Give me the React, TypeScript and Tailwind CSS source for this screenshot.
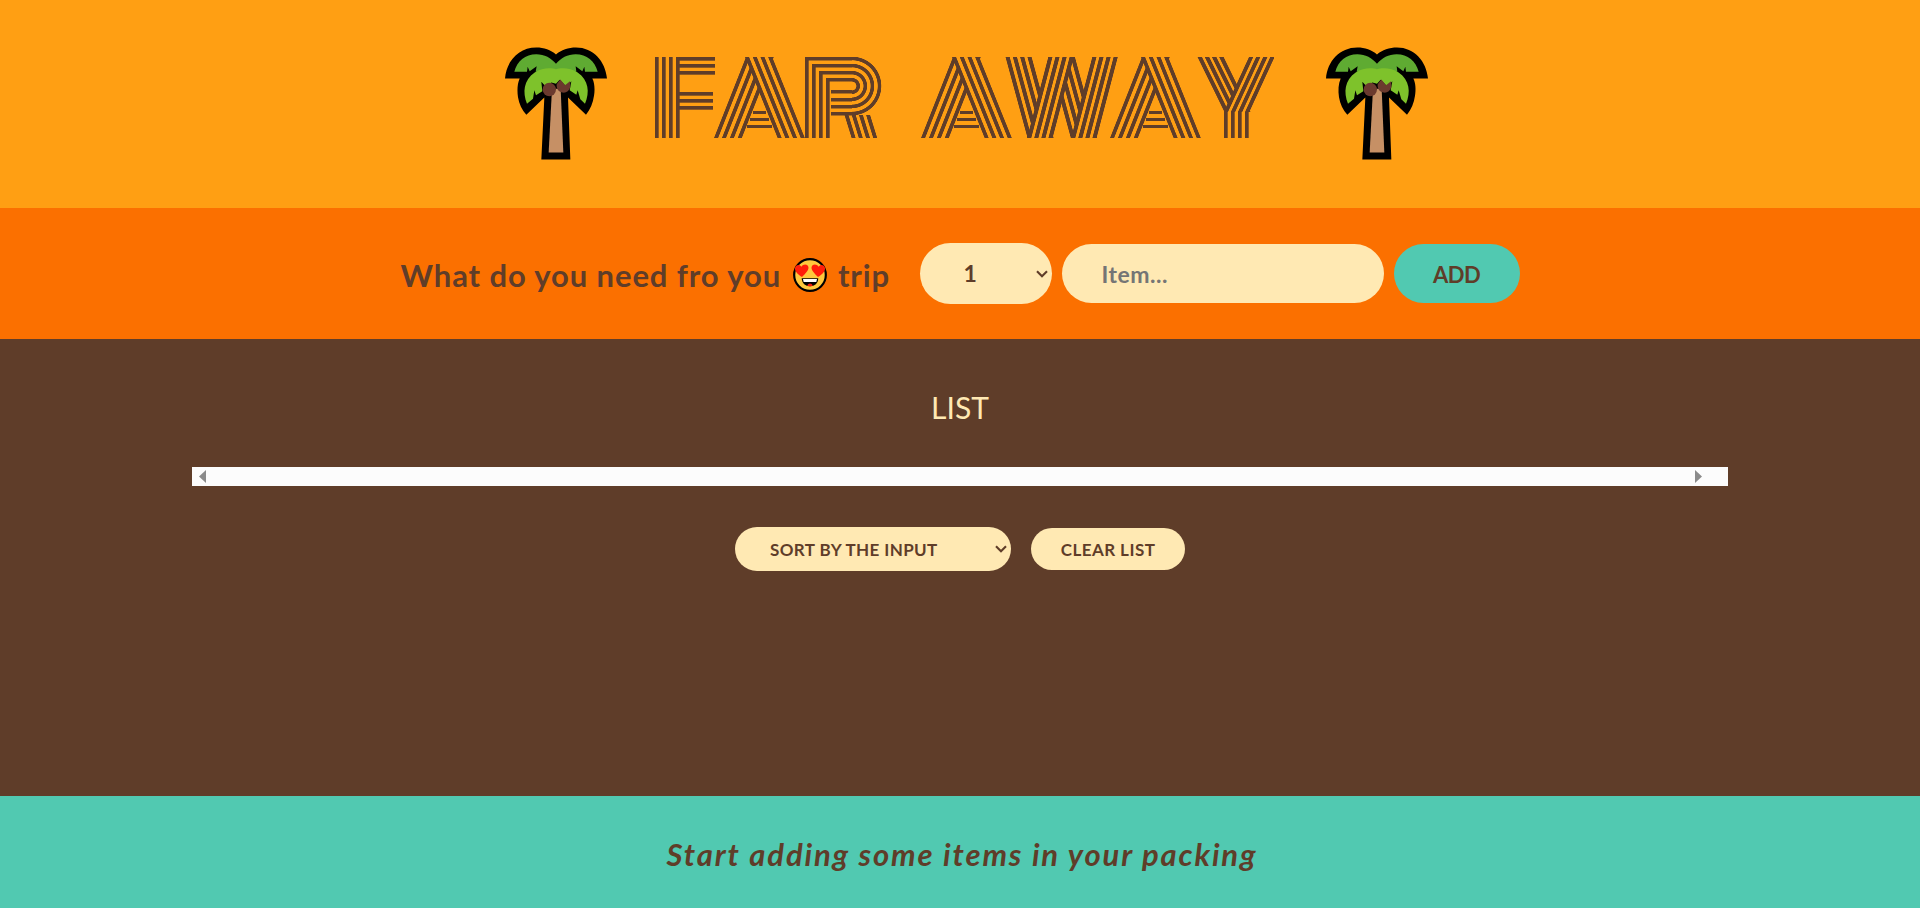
import type { CSSProperties } from "react";

const INK = "#5f3d29";
const PAPER = "#ff9f13";
const CLEAR = "rgba(95,61,41,0)";

type Tile = { image: string; x: number; y: number; w: number; h: number };

// A flat bar.
const bar = (x: number, y: number, w: number, h: number): Tile => ({
  image: `linear-gradient(${INK}, ${INK})`,
  x,
  y,
  w,
  h,
});

// Groups of four slanted stripes; `lean` is the horizontal shift per pixel of height,
// each start is the x of a group's left edge at the tile's top.
const stripes = (
  x: number,
  y: number,
  w: number,
  h: number,
  lean: number,
  starts: number[],
  pitch = 7.9,
  thick = 4.1,
  count = 4
): Tile => {
  const n = Math.hypot(1, lean);
  const angle = (Math.atan2(1, lean) * 180) / Math.PI;
  const len = w / n + (h * Math.abs(lean)) / n;
  const at = (px: number) => (px - w / 2 + (lean * h) / 2) / n + len / 2;
  const stops: string[] = [`${CLEAR} -400px`];
  const soft = 0.35;
  starts.forEach((start) => {
    for (let i = 0; i < count; i++) {
      const a = at(start + i * pitch);
      const b = at(start + i * pitch + thick);
      const before = i === 0 ? CLEAR : PAPER;
      const after = i === count - 1 ? CLEAR : PAPER;
      stops.push(`${before} ${a - soft}px`, `${INK} ${a + soft}px`, `${INK} ${b - soft}px`, `${after} ${b + soft}px`);
    }
  });
  return { image: `linear-gradient(${angle}deg, ${stops.join(", ")})`, x, y, w, h };
};

const letterA: Tile[] = [
  stripes(0, 0, 92, 81, 0.403, [31], 7.7),
  stripes(0, 0, 92, 81, -0.395, [32]),
  bar(39, 54, 13, 3.2),
  bar(36, 61, 19, 3.2),
  bar(33, 68, 25, 3.2),
];

const ring = (): Tile => {
  const s: string[] = [];
  [4.4, 11.5, 18.6, 25.7].forEach((r) => {
    s.push(`${CLEAR} ${r - 0.3}px`, `${INK} ${r + 0.3}px`, `${INK} ${r + 3.3}px`, `${CLEAR} ${r + 3.9}px`);
  });
  return { image: `radial-gradient(circle at 0px 29px, ${s.join(", ")})`, x: 47, y: 0, w: 30, h: 59 };
};

const four = [0, 1, 2, 3];

const letterR: Tile[] = [
  ring(),
  ...four.map((i) => bar(Math.round(i * 7.1), Math.round(i * 7.1), 3.7, 81 - i * 7)),
  ...four.map((i) => bar(i * 7, Math.round(i * 7.1), 47 - i * 7, 3.5)),
  ...four.map((i) => bar(26, 33.4 + i * 7.1, 21, 3.5)),
  stripes(36, 58, 41, 23, 0.31, [3.5], 7.2, 4),
];

const letterF: Tile[] = [
  ...four.map((i) => bar(Math.round(i * 7.1), 0, 3.7, 81)),
  ...[0, 7, 14].map((y) => bar(24, y, 36, 3.7)),
  ...[35, 42, 49].map((y) => bar(24, y, 34, 3.7)),
];

const letterW: Tile[] = [
  stripes(0, 0, 114, 81, -0.262, [87.3], 7.1, 4.2),
  stripes(0, 0, 114, 81, -0.262, [43.3], 7.1, 4.2),
  stripes(0, 0, 114, 81, 0.272, [0.5, 43.8], 7.3, 4.2),
];

const letterY: Tile[] = [
  stripes(0, 0, 77, 55, -0.46, [52], 7.1, 4.3),
  stripes(0, 0, 77, 55, 0.49, [0.5], 7.2, 4.5),
  ...four.map((i) => bar(26.6 + i * 7, 54.5, 3.7, 26.5)),
];

const paint = (tiles: Tile[]): CSSProperties => ({
  backgroundImage: tiles.map((t) => t.image).join(", "),
  backgroundPosition: tiles.map((t) => `${t.x}px ${t.y}px`).join(", "),
  backgroundSize: tiles.map((t) => `${t.w}px ${t.h}px`).join(", "),
});

const letters = [
  { char: "F", tiles: letterF, box: "w-[60px] indent-[-5px]" },
  { char: "A", tiles: letterA, box: "w-[92px] -ml-px indent-[-2px]" },
  { char: "R", tiles: letterR, box: "w-[77px] -ml-px indent-[3px]" },
  { char: " ", tiles: [], box: "w-[39px]" },
  { char: "A", tiles: letterA, box: "w-[92px]" },
  { char: "W", tiles: letterW, box: "w-[114px] -ml-[8px] indent-[-6px]" },
  { char: "A", tiles: letterA, box: "w-[92px] -ml-[9px]" },
  { char: "Y", tiles: letterY, box: "w-[77px] -ml-[5px] indent-[-5px]" },
];

function Title() {
  return (
    <h1 className="flex h-[81px] font-['Inter',sans-serif] text-[111px] leading-[81px] font-black tracking-[-14px] whitespace-pre text-transparent">
      {letters.map((l, i) => (
        <span
          key={i}
          style={paint(l.tiles)}
          className={`block h-[81px] shrink-0 bg-clip-text bg-no-repeat [-webkit-text-stroke:24px_transparent] ${l.box}`}
        >
          {l.char}
        </span>
      ))}
    </h1>
  );
}

function Palm() {
  return (
    <svg viewBox="14 20 306 338" className="h-[113px] w-[102px] shrink-0" aria-hidden="true">
      <path
        d="M14 114C18 62 55 21 108 21C131 21 151 28 167 42C183 28 204 21 227 21C279 21 315 62 320 114H276C283 127 284 148 281 166C278 188 270 207 257 223L203 171L210 357H123L132 171L78 223C65 208 56 190 53 170C50 150 51 130 58 114Z"
        fill="#000"
      />
      <path d="M42 94C50 61 75 41 108 41C132 41 153 52 167 70C181 52 202 41 226 41C259 41 284 61 292 94H254L252 79L246 92L226 77L228 94H106L109 77L88 92L82 79L80 94Z" fill="#5fab32" />
      <path d="M155 145H181L189 336H145Z" fill="#c69065" />
      <path
        d="M80 190C66 155 70 119 103 96C125 81 151 81 167 86C183 81 210 81 232 96C265 119 269 155 254 190L240 176L232 149L228 163L208 149L213 122L198 138L178 118L167 130L153 126L136 138L123 124L126 152L107 164L102 149L98 175Z"
        fill="#7ec22b"
      />
      <circle cx="147" cy="147" r="20" fill="#6b3a2e" />
      <path d="M169 131L180 117L194 134L209 122L210 140C206 152 197 158 186 156C174 153 168 144 169 131Z" fill="#6b3a2e" />
    </svg>
  );
}

function HeartEyes() {
  return (
    <svg viewBox="0 0 102 102" className="mr-[11px] ml-[12px] h-[34px] w-[34px] shrink-0" aria-hidden="true">
      <circle cx="51" cy="51" r="47.5" fill="#ffc83d" stroke="#000" strokeWidth="6.5" />
      <path d="M27 57C13 48 5 40 6 30C8 20 20 18 25 26C31 17 43 18 46 26C49 36 37 46 27 57Z" fill="#ff1d0a" />
      <path d="M75 57C65 46 53 36 56 26C59 18 71 17 77 26C82 18 94 20 96 30C97 40 89 48 75 57Z" fill="#ff1d0a" />
      <path d="M26 61H76C75 77 65 85 51 85S27 77 26 61Z" fill="#000" />
      <path d="M30 63H72L70 72H32Z" fill="#fff" />
      <path d="M43 83C45 74 57 74 59 83C54 85 48 85 43 83Z" fill="#f01a0c" />
    </svg>
  );
}

function Chevron() {
  return (
    <svg
      viewBox="0 0 12 8"
      className="pointer-events-none absolute top-1/2 right-[4px] h-[8px] w-[12px] -translate-y-1/2"
      aria-hidden="true"
    >
      <path d="M1 1.2L6 6.2L11 1.2" fill="none" stroke="#5f3d29" strokeWidth="2.1" />
    </svg>
  );
}

export default function App() {
  return (
    <div className="flex h-[908px] w-full flex-col overflow-hidden font-['Lato',sans-serif] text-[#5f3d29]">
      <header className="flex h-[208px] shrink-0 justify-center bg-[#ff9f13] pt-[46.5px] pl-[13px]">
        <Palm />
        <div className="mr-[52px] ml-[48px] pt-[10.5px]">
          <Title />
        </div>
        <Palm />
      </header>

      <form className="flex h-[131px] shrink-0 items-center justify-center bg-[#fb7000]">
        <h3 className="mr-[31px] flex h-[61px] w-[488px] items-center pt-[3px] text-[31px] font-bold whitespace-nowrap">
          <span className="tracking-[0.9px]">What do you need fro you</span>
          <HeartEyes />
          <span className="tracking-[0.8px]">trip</span>
        </h3>
        <div className="relative mr-[10px]">
          <select className="block h-[61px] w-[132px] appearance-none rounded-full bg-[#ffe9b3] pl-[44px] text-[23px] font-bold">
            <option>1</option>
          </select>
          <Chevron />
        </div>
        <input
          placeholder="Item..."
          className="mr-[10px] h-[59px] w-[322px] rounded-full bg-[#ffe9b3] px-10 text-[23px] font-bold tracking-[0.5px] placeholder:text-[#757575]"
        />
        <button type="button" className="h-[59px] w-[126px] rounded-full bg-[#51c9b1] pt-[1px] text-[22px] font-bold tracking-[-0.5px]">
          ADD
        </button>
      </form>

      <main className="flex min-h-0 flex-1 flex-col items-center bg-[#5f3d29]">
        <p className="mt-[48px] h-[40px] text-[30px] leading-[40px] text-[#ffe9b3]">LIST</p>
        <div className="mt-[40px] flex h-[19px] w-[1536px] items-center justify-between bg-[#fcfcfc] pr-[26px] pl-[7px]">
          <svg viewBox="0 0 7 13" className="h-[13px] w-[7px]" aria-hidden="true">
            <path d="M7 0V13L0 6.5Z" fill="#8b8b8b" />
          </svg>
          <svg viewBox="0 0 7 13" className="h-[13px] w-[7px]" aria-hidden="true">
            <path d="M0 0V13L7 6.5Z" fill="#8b8b8b" />
          </svg>
        </div>
        <div className="mt-[41px] flex items-center gap-5">
          <div className="relative">
            <select className="block h-[44px] w-[276px] appearance-none rounded-full bg-[#ffe9b3] pt-[1px] pl-[35px] text-[17px] font-bold tracking-[0.4px]">
              <option>SORT BY THE INPUT</option>
            </select>
            <Chevron />
          </div>
          <button
            type="button"
            className="h-[42px] w-[154px] rounded-full bg-[#ffe9b3] pt-[1px] text-[17px] font-bold tracking-[0.45px]"
          >
            CLEAR LIST
          </button>
        </div>
      </main>

      <footer className="flex h-[112px] shrink-0 items-center justify-center bg-[#51c9b1] pt-[5px] pl-[4px]">
        <em className="text-[31px] font-bold tracking-[1.85px] italic">Start adding some items in your packing</em>
      </footer>
    </div>
  );
}
